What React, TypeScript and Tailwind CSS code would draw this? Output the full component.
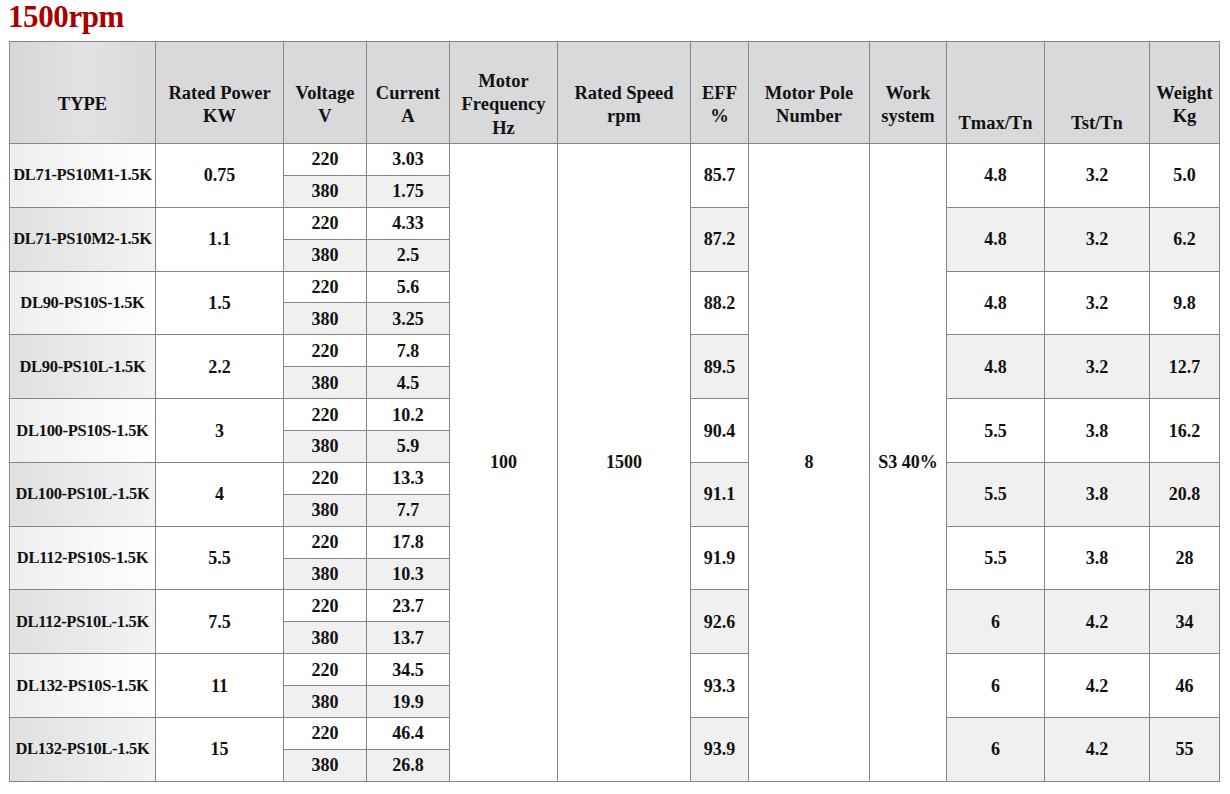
const motors = [
  { type: 'DL71-PS10M1-1.5K', kw: '0.75', a220: '3.03', a380: '1.75', eff: '85.7', tmax: '4.8', tst: '3.2', kg: '5.0' },
  { type: 'DL71-PS10M2-1.5K', kw: '1.1', a220: '4.33', a380: '2.5', eff: '87.2', tmax: '4.8', tst: '3.2', kg: '6.2' },
  { type: 'DL90-PS10S-1.5K', kw: '1.5', a220: '5.6', a380: '3.25', eff: '88.2', tmax: '4.8', tst: '3.2', kg: '9.8' },
  { type: 'DL90-PS10L-1.5K', kw: '2.2', a220: '7.8', a380: '4.5', eff: '89.5', tmax: '4.8', tst: '3.2', kg: '12.7' },
  { type: 'DL100-PS10S-1.5K', kw: '3', a220: '10.2', a380: '5.9', eff: '90.4', tmax: '5.5', tst: '3.8', kg: '16.2' },
  { type: 'DL100-PS10L-1.5K', kw: '4', a220: '13.3', a380: '7.7', eff: '91.1', tmax: '5.5', tst: '3.8', kg: '20.8' },
  { type: 'DL112-PS10S-1.5K', kw: '5.5', a220: '17.8', a380: '10.3', eff: '91.9', tmax: '5.5', tst: '3.8', kg: '28' },
  { type: 'DL112-PS10L-1.5K', kw: '7.5', a220: '23.7', a380: '13.7', eff: '92.6', tmax: '6', tst: '4.2', kg: '34' },
  { type: 'DL132-PS10S-1.5K', kw: '11', a220: '34.5', a380: '19.9', eff: '93.3', tmax: '6', tst: '4.2', kg: '46' },
  { type: 'DL132-PS10L-1.5K', kw: '15', a220: '46.4', a380: '26.8', eff: '93.9', tmax: '6', tst: '4.2', kg: '55' },
];

const cell = 'border border-[#858585] text-center align-middle p-0';
const head = `${cell} pt-[25px]`;

export default function App() {
  return (
    <div className="bg-white w-[1230px] h-[794px] font-['Liberation_Serif',serif] font-bold text-[#111]">
      <h1 className="h-[41px] pl-[8px] text-[31px] leading-[34px] font-bold text-[#a80000] tracking-[-0.4px]">
        1500rpm
      </h1>
      <div className="pl-[9px]">
        <table className="border-collapse table-fixed w-[1210px] text-[18px] leading-[22px]">
          <colgroup>
            <col className="w-[146px]" />
            <col className="w-[128px]" />
            <col className="w-[83px]" />
            <col className="w-[83px]" />
            <col className="w-[108px]" />
            <col className="w-[133px]" />
            <col className="w-[58px]" />
            <col className="w-[121px]" />
            <col className="w-[77px]" />
            <col className="w-[98px]" />
            <col className="w-[105px]" />
            <col className="w-[70px]" />
          </colgroup>
          <thead className="text-[18.5px] leading-[23.5px]">
            <tr className="h-[102px] bg-[#d9d9db]">
              <th className={`${head} bg-gradient-to-r from-[#d6d6d8] via-[#e2e2e4] to-[#d9d9db]`}>TYPE</th>
              <th className={head}>Rated Power<br />KW</th>
              <th className={head}>Voltage<br />V</th>
              <th className={head}>Current<br />A</th>
              <th className={head}>Motor<br />Frequency<br />Hz</th>
              <th className={head}>Rated Speed<br />rpm</th>
              <th className={head}>EFF<br />%</th>
              <th className={head}>Motor Pole<br />Number</th>
              <th className={head}>Work<br />system</th>
              <th className={`${cell} !align-bottom pb-[8px]`}>Tmax/Tn</th>
              <th className={`${cell} !align-bottom pb-[8px]`}>Tst/Tn</th>
              <th className={head}>Weight<br />Kg</th>
            </tr>
          </thead>
          <tbody>
            {motors.map((m, i) => {
              const odd = i % 2 === 1;
              const band = odd ? 'bg-[#f0f0f0]' : 'bg-white';
              const typeBg = odd
                ? 'bg-gradient-to-r from-[#e0e0e0] to-[#f3f3f3]'
                : 'bg-gradient-to-r from-[#eeeeee] to-white';
              return [
                <tr key={`${m.type}-a`} className="h-[31.9px]">
                  <td rowSpan={2} className={`${cell} ${typeBg} text-[16.5px] tracking-[-0.3px]`}>{m.type}</td>
                  <td rowSpan={2} className={`${cell} bg-white`}>{m.kw}</td>
                  <td className={`${cell} bg-white`}>220</td>
                  <td className={`${cell} bg-white`}>{m.a220}</td>
                  {i === 0 && (
                    <>
                      <td rowSpan={20} className={`${cell} bg-white`}>100</td>
                      <td rowSpan={20} className={`${cell} bg-white`}>1500</td>
                    </>
                  )}
                  <td rowSpan={2} className={`${cell} ${band}`}>{m.eff}</td>
                  {i === 0 && (
                    <>
                      <td rowSpan={20} className={`${cell} bg-white`}>8</td>
                      <td rowSpan={20} className={`${cell} bg-white`}>S3 40%</td>
                    </>
                  )}
                  <td rowSpan={2} className={`${cell} ${band}`}>{m.tmax}</td>
                  <td rowSpan={2} className={`${cell} ${band}`}>{m.tst}</td>
                  <td rowSpan={2} className={`${cell} ${band}`}>{m.kg}</td>
                </tr>,
                <tr key={`${m.type}-b`} className="h-[31.9px]">
                  <td className={`${cell} bg-[#f0f0f0]`}>380</td>
                  <td className={`${cell} bg-[#f0f0f0]`}>{m.a380}</td>
                </tr>,
              ];
            })}
          </tbody>
        </table>
      </div>
    </div>
  );
}
